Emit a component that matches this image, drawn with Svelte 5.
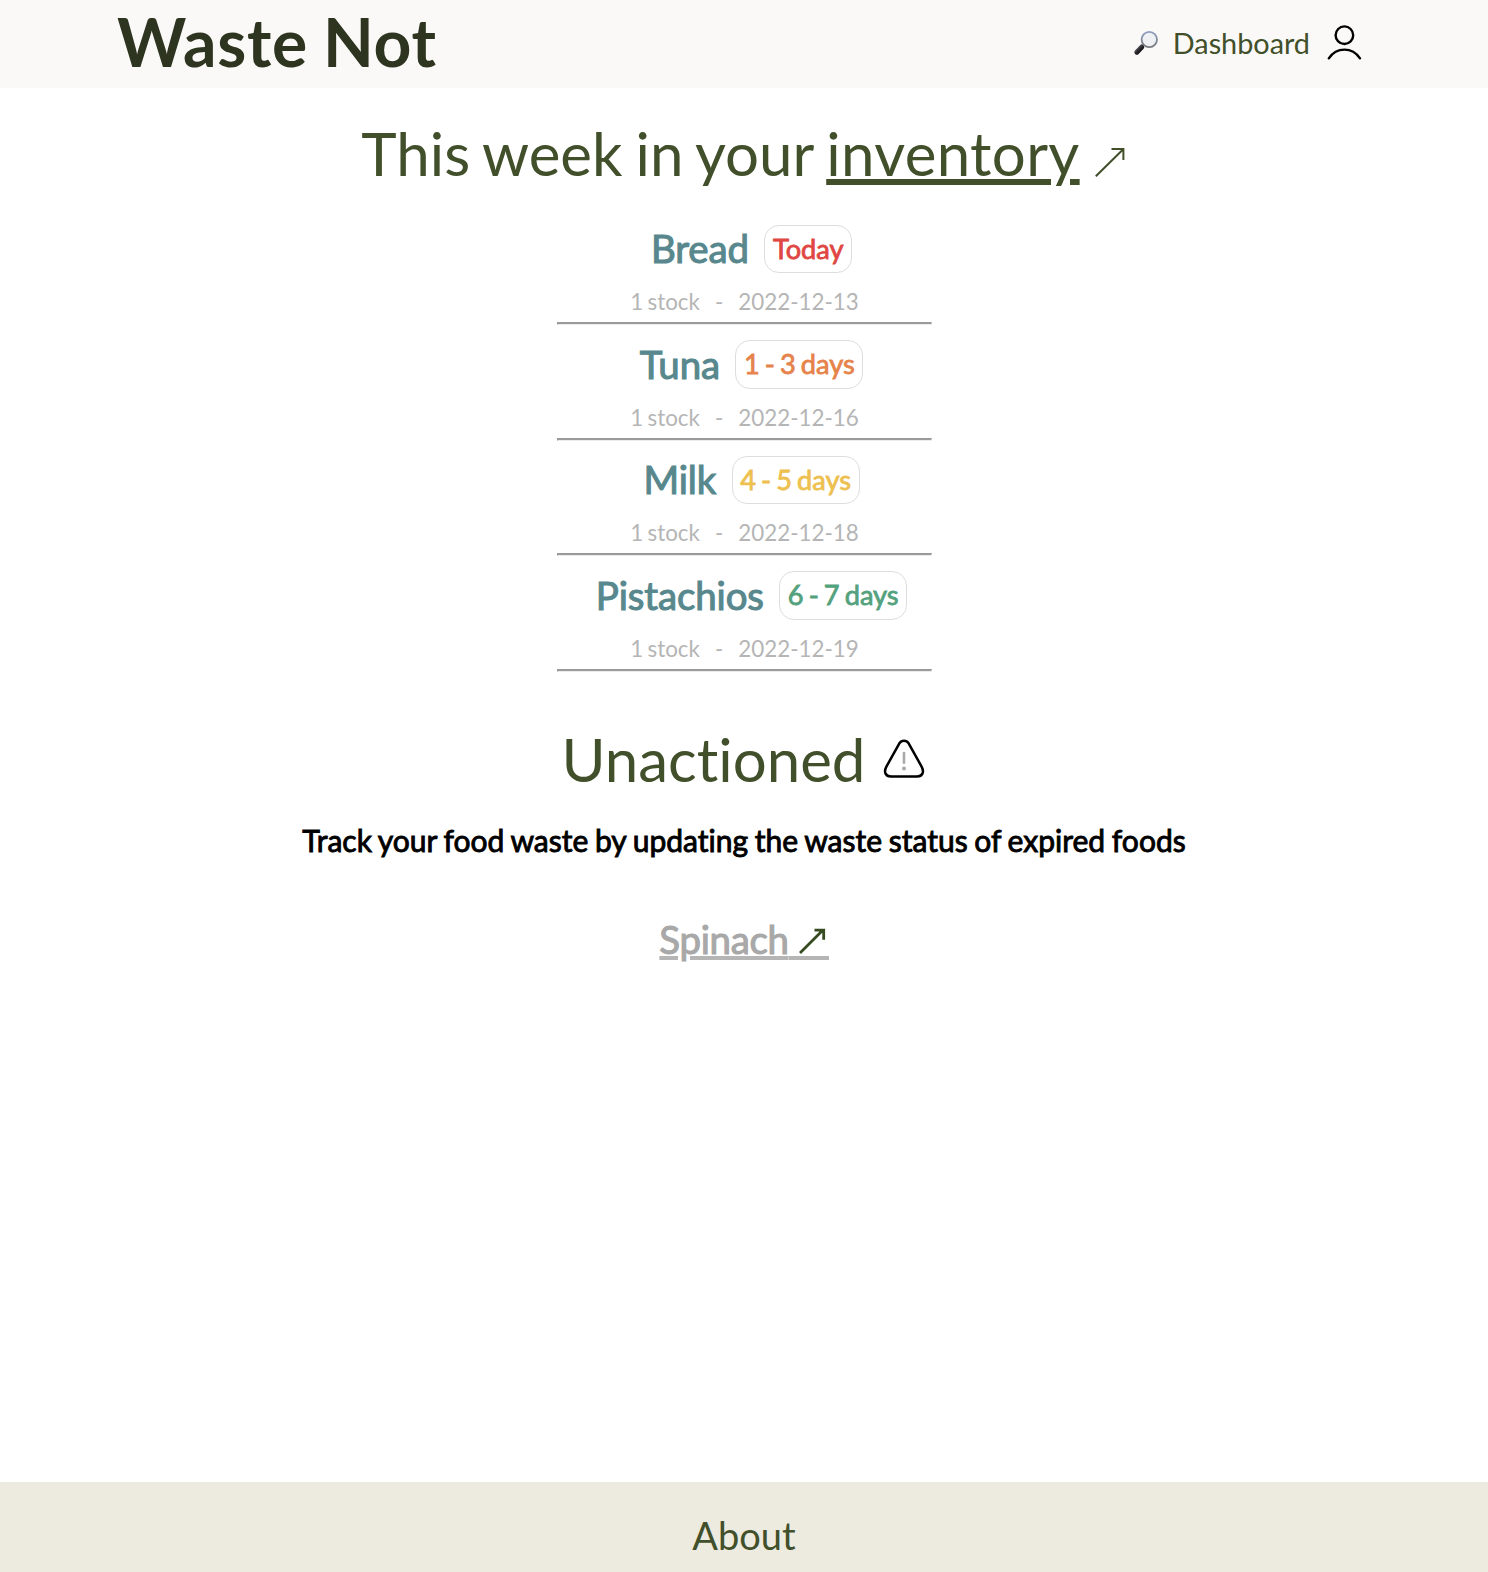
<script>
  const foods = [
    { name: 'Bread', due: 'Today', tone: 'red', date: '2022-12-13' },
    { name: 'Tuna', due: '1 - 3 days', tone: 'orange', date: '2022-12-16' },
    { name: 'Milk', due: '4 - 5 days', tone: 'yellow', date: '2022-12-18' },
    { name: 'Pistachios', due: '6 - 7 days', tone: 'green', date: '2022-12-19' }
  ];
</script>

<div class="page">
  <header>
    <div class="logo">Waste Not</div>
    <nav>
      <svg class="search" width="26" height="26" viewBox="0 0 26 26">
        <defs>
          <linearGradient id="handle" x1="0" y1="0" x2="1" y2="1">
            <stop offset="0" stop-color="#6a6b72" />
            <stop offset="0.45" stop-color="#2a2a30" />
            <stop offset="1" stop-color="#08080b" />
          </linearGradient>
          <linearGradient id="rim" x1="0" y1="0" x2="0" y2="1">
            <stop offset="0" stop-color="#8c9ec0" />
            <stop offset="1" stop-color="#77777b" />
          </linearGradient>
        </defs>
        <path d="M8.6 17.2 L11 14.6" stroke="#77777c" stroke-width="2" />
        <path d="M3.8 22.2 L8.8 17" stroke="url(#handle)" stroke-width="5" stroke-linecap="round" />
        <circle cx="16.3" cy="9.5" r="7.7" fill="#eff0f4" stroke="url(#rim)" stroke-width="1.8" />
      </svg>
      <span>Dashboard</span>
      <svg class="person" width="36" height="38" viewBox="0 0 36 38" fill="none" stroke="#000" stroke-width="2.4" stroke-linecap="round">
        <circle cx="18.4" cy="11.2" r="8.8" />
        <path d="M2.8 34.3 C10.6 22.7 26.2 22.7 34 34.3" />
      </svg>
    </nav>
  </header>

  <main>
    <h1>
      <span>This week in your <a>inventory</a></span>
      <svg width="30" height="30" viewBox="0 0 30 30" fill="none" stroke="#414f2a" stroke-width="2">
        <path d="M.8 29.3 L28 2.5 M16.5 2.1 H28.4 V13" />
      </svg>
    </h1>

    <ul>
      {#each foods as food}
        <li>
          <div class="title">
            <span class="name">{food.name}</span>
            <span class="badge {food.tone}">{food.due}</span>
          </div>
          <div class="detail"><span>1 stock</span><span>-</span><span>{food.date}</span></div>
          <hr />
        </li>
      {/each}
    </ul>

    <h2>
      <span>Unactioned</span>
      <svg width="42" height="40" viewBox="0 0 42 40" fill="none" stroke-linecap="round">
        <path d="M16.5 4.1 C18.5 .8 23.5 .8 25.5 4.1 L38.6 27.6 C41.6 33.2 39.3 37.4 34.2 37.4 H7.8 C2.7 37.4 .4 33.2 3.4 27.6 Z" stroke="#000" stroke-width="2.5" />
        <path d="M21 14 V23.8" stroke="#aaa" stroke-width="2.6" />
        <circle cx="21" cy="29.4" r="2" fill="#aaa" />
      </svg>
    </h2>
    <p>Track your food waste by updating the waste status of expired foods</p>
    <a class="expired"><span>Spinach</span><svg width="40" height="36" viewBox="0 0 40 36" fill="none">
        <path d="M0 34 H40" stroke="#b5b5b5" stroke-width="4" />
        <path d="M11 29 L34 6 M25.5 6.2 H34.7 V15.8" stroke="#364a20" stroke-width="2.8" />
      </svg></a>
  </main>

  <footer>About</footer>
</div>

<style>
  .page {
    display: flex;
    flex-direction: column;
    height: 1572px;
    overflow: hidden;
    background: #fff;
    color: #414f2a;
    font-family: Lato, sans-serif;
    font-weight: 400;
    font-variant-ligatures: none;
  }
  header {
    display: flex;
    justify-content: space-between;
    align-items: center;
    flex: none;
    box-sizing: border-box;
    height: 88px;
    padding: 0 126px 3px 117px;
    background: #faf9f7;
  }
  .logo {
    color: #2d341f;
    font-size: 66px;
    font-weight: 700;
    line-height: 82px;
    padding-bottom: 2px;
    letter-spacing: 0.7px;
    word-spacing: -1.5px;
  }
  nav {
    display: flex;
    align-items: center;
    font-size: 28.8px;
    line-height: 36px;
  }
  .search { margin-right: 14px; }
  .person { margin-left: 16px; }
  main {
    display: flex;
    flex: 1;
    flex-direction: column;
    align-items: center;
  }
  h1, h2 {
    display: flex;
    margin: 0;
    font-size: 60px;
    font-weight: 400;
    line-height: 72px;
  }
  h1 {
    align-items: center;
    gap: 15px;
    margin-top: 29px;
    padding-right: 2px;
    word-spacing: -2.3px;
  }
  h1 svg { margin-top: 18px; }
  h1 a {
    letter-spacing: 0.35px;
    text-decoration: underline;
    text-decoration-thickness: 6px;
    text-underline-offset: 3px;
  }
  ul { list-style: none; width: 375px; margin: 35.5px 0 0; padding: 0; }
  li {
    display: flex;
    flex-direction: column;
    height: 115.5px;
  }
  .title {
    display: flex;
    align-items: center;
    justify-content: center;
    gap: 15.5px;
    height: 48.5px;
    padding-left: 15px;
  }
  .name {
    margin-top: -1px;
    color: #58888d;
    font-size: 38.4px;
    line-height: 46px;
    letter-spacing: -0.1px;
    -webkit-text-stroke: 1.1px currentColor;
  }
  .badge {
    box-sizing: border-box;
    height: 48.5px;
    padding: 0 7.5px;
    border: 1.5px solid #ddd;
    border-radius: 15px;
    font-size: 27.2px;
    line-height: 46.5px;
    word-spacing: -1.9px;
    -webkit-text-stroke: 0.8px currentColor;
  }
  .red { color: #e04642; }
  .orange { color: #e6834b; }
  .yellow { color: #edc04f; }
  .green { color: #54a17e; }
  .detail {
    display: flex;
    justify-content: center;
    gap: 15px;
    margin-top: 15px;
    padding-left: 1px;
    color: #b5b5b5;
    font-size: 22.4px;
    line-height: 28px;
    word-spacing: -1.4px;
  }
  hr {
    width: 373px;
    height: 0;
    margin: 6px 0 0;
    border: 1px solid;
    border-top-width: 2px;
    border-color: #9a9a9a #ececec #ececec #9a9a9a;
  }
  h2 { align-items: center; gap: 18px; margin-top: 38px; padding-right: 1px; }
  h2 svg { margin-bottom: 3px; }
  h2 span { position: relative; top: -2px; }
  p {
    margin: 24px 0 0;
    color: #000;
    font-size: 30px;
    line-height: 38px;
    word-spacing: -1px;
    -webkit-text-stroke: 0.9px currentColor;
  }
  .expired {
    margin-top: 60px;
    color: #a8a8a8;
    font-size: 38.4px;
    line-height: 40px;
    -webkit-text-stroke: 1.1px currentColor;
  }
  .expired span {
    letter-spacing: -0.3px;
    text-decoration: underline #b5b5b5 4px;
    text-underline-offset: 2px;
  }
  .expired svg { vertical-align: -6px; }
  footer {
    flex: none;
    box-sizing: border-box;
    height: 90px;
    padding-top: 29px;
    background: #edeae0;
    text-align: center;
    font-size: 38px;
    line-height: 48px;
  }
</style>
